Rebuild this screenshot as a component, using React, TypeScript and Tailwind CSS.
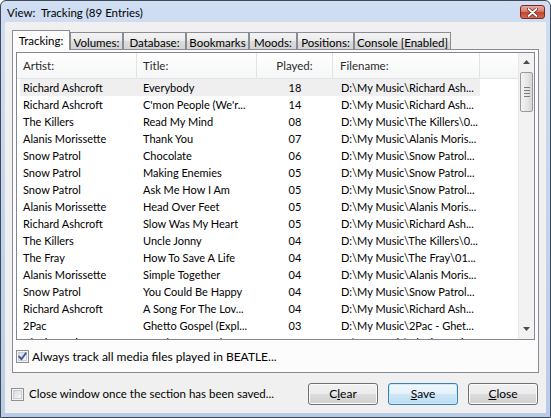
import React from "react";

type Row = [string, string, string, string];

const rows: Row[] = [
  ["Richard Ashcroft", "Everybody", "18", "D:\\My Music\\Richard Ash..."],
  ["Richard Ashcroft", "C'mon People (We'r...", "14", "D:\\My Music\\Richard Ash..."],
  ["The Killers", "Read My Mind", "08", "D:\\My Music\\The Killers\\0..."],
  ["Alanis Morissette", "Thank You", "07", "D:\\My Music\\Alanis Moris..."],
  ["Snow Patrol", "Chocolate", "06", "D:\\My Music\\Snow Patrol..."],
  ["Snow Patrol", "Making Enemies", "05", "D:\\My Music\\Snow Patrol..."],
  ["Snow Patrol", "Ask Me How I Am", "05", "D:\\My Music\\Snow Patrol..."],
  ["Alanis Morissette", "Head Over Feet", "05", "D:\\My Music\\Alanis Moris..."],
  ["Richard Ashcroft", "Slow Was My Heart", "05", "D:\\My Music\\Richard Ash..."],
  ["The Killers", "Uncle Jonny", "04", "D:\\My Music\\The Killers\\0..."],
  ["The Fray", "How To Save A Life", "04", "D:\\My Music\\The Fray\\01..."],
  ["Alanis Morissette", "Simple Together", "04", "D:\\My Music\\Alanis Moris..."],
  ["Snow Patrol", "You Could Be Happy", "04", "D:\\My Music\\Snow Patrol..."],
  ["Richard Ashcroft", "A Song For The Lov...", "04", "D:\\My Music\\Richard Ash..."],
  ["2Pac", "Ghetto Gospel (Expl...", "03", "D:\\My Music\\2Pac - Ghet..."],
  ["Alanis Morissette", "Hand In My Pocket", "03", "D:\\My Music\\Alanis Moris..."],
];

const tabs = [
  { label: "Tracking:", w: "w-[58px]", sel: true },
  { label: "Volumes:", w: "w-[53px]", sel: false },
  { label: "Database:", w: "w-[63px]", sel: false },
  { label: "Bookmarks", w: "w-[63px]", sel: false },
  { label: "Moods:", w: "w-[48px]", sel: false },
  { label: "Positions:", w: "w-[57px]", sel: false },
  { label: "Console [Enabled]", w: "w-[97px]", sel: false },
];

function CheckBox({ checked }: { checked: boolean }) {
  return (
    <div className="w-[13px] h-[13px] border border-[#8e8f8f] bg-[#f4f4f4] flex items-center justify-center shrink-0">
      <div className="w-[9px] h-[9px] border border-[#c9ccd1] bg-gradient-to-br from-[#d9dce0] to-[#f7f7f7] relative">
        {checked && (
          <svg width="11" height="11" viewBox="0 0 11 11" className="absolute -left-[2px] -top-[2px]">
            <path d="M2.2 5.6 L4.4 8.2 L8.8 2.2" fill="none" stroke="#3c56a0" strokeWidth="1.9" strokeLinecap="round" strokeLinejoin="round" />
          </svg>
        )}
      </div>
    </div>
  );
}

function Button({ children, focused }: { children: React.ReactNode; focused?: boolean }) {
  return (
    <div
      className={
        focused
          ? "w-[70px] h-[22px] rounded-[3px] border border-[#3c7fb1] bg-[linear-gradient(#f1f8fd_0%,#e3f1fb_50%,#cfe7f7_50%,#bcdcf2_100%)] shadow-[inset_0_0_0_1px_#c8ecfb] flex items-center justify-center text-[12px] text-black"
          : "w-[70px] h-[22px] rounded-[3px] border border-[#707070] bg-[linear-gradient(#f2f2f2_0%,#ebebeb_50%,#dddddd_50%,#cfcfcf_100%)] shadow-[inset_0_0_0_1px_#fbfbfb] flex items-center justify-center text-[12px] text-black"
      }
    >
      {children}
    </div>
  );
}

export default function App() {
  return (
    <div className="w-[551px] h-[418px] flex flex-col border border-[#404854] rounded-t-[6px] bg-gradient-to-b from-[#cfdef2] via-[#c2d5ee] to-[#b8cce8] overflow-hidden font-['Lato','Liberation_Sans',Arial,sans-serif] text-black">
      {/* Title bar */}
      <div className="h-[21px] shrink-0 flex items-start justify-between pl-[6px] pr-[5px]">
        <div className="pt-[5px] text-[11.5px] leading-[14px] whitespace-pre text-black">View:  Tracking (89 Entries)</div>
        <div className="mt-[4px] w-[25px] h-[14px] rounded-[3px] border border-[#7a2a22] bg-[linear-gradient(#e9a99c_0%,#d7806f_45%,#c2432e_50%,#cf6a52_100%)] flex items-center justify-center">
          <svg width="11" height="9" viewBox="0 0 11 9">
            <path d="M1.5 1 L9.5 8 M9.5 1 L1.5 8" stroke="#5a2018" strokeWidth="3.2" strokeLinecap="round" />
            <path d="M1.5 1 L9.5 8 M9.5 1 L1.5 8" stroke="#ffffff" strokeWidth="1.8" strokeLinecap="round" />
          </svg>
        </div>
      </div>

      {/* Client area */}
      <div className="flex-1 mx-[4px] mb-[4px] bg-[#f0f0f0] flex flex-col pt-[8px] px-[7px]">
        {/* Tabs */}
        <div className="h-[19px] flex items-end shrink-0">
          {tabs.map((t) =>
            t.sel ? (
              <div
                key={t.label}
                className={`${t.w} h-[20px] -mb-[1px] relative z-10 border border-b-0 border-[#898c95] bg-[#fcfcfc] text-[11.5px] leading-[14px] pt-[3px] text-center whitespace-nowrap`}
              >
                {t.label}
              </div>
            ) : (
              <div
                key={t.label}
                className={`${t.w} h-[17px] border border-b-0 border-[#898c95] bg-[linear-gradient(#f3f3f3_0%,#ebebeb_50%,#dddddd_50%,#d3d3d3_100%)] text-[11.5px] leading-[14px] pt-[3px] text-center whitespace-nowrap`}
              >
                {t.label}
              </div>
            )
          )}
        </div>

        {/* Tab panel */}
        <div className="h-[324px] shrink-0 border border-[#898c95] bg-[#fcfcfc] flex flex-col pt-[2px] px-[3px]">
          {/* List view */}
          <div className="h-[288px] shrink-0 border border-[#828790] bg-white flex overflow-hidden">
            <div className="flex-1 flex flex-col overflow-hidden">
              {/* Header */}
              <div className="h-[26px] shrink-0 flex bg-gradient-to-b from-white to-[#f5f6f7] border-b border-[#e5e5e5] text-[11.5px] text-[#2b2b2b]">
                <div className="w-[120px] border-r border-[#e3e3e3] pl-[6px] flex items-center">Artist:</div>
                <div className="w-[120px] border-r border-[#e3e3e3] pl-[6px] flex items-center">Title:</div>
                <div className="w-[76px] border-r border-[#e3e3e3] flex items-center justify-center">Played:</div>
                <div className="w-[147px] border-r border-[#e3e3e3] pl-[7px] flex items-center">Filename:</div>
                <div className="flex-1" />
              </div>
              {/* Rows */}
              {rows.map((r, i) => (
                <div
                  key={i}
                  className={`ml-[3px] w-[460px] h-[17px] shrink-0 flex items-center text-[11px] leading-[17px] whitespace-nowrap ${
                    i === 0 ? "bg-[#efefef]" : ""
                  }`}
                >
                  <div className="w-[117px] pl-[3px] overflow-hidden">{r[0]}</div>
                  <div className="w-[120px] pl-[6px] overflow-hidden">{r[1]}</div>
                  <div className="w-[76px] text-center">{r[2]}</div>
                  <div className="w-[147px] pl-[8px] overflow-hidden">{r[3]}</div>
                </div>
              ))}
            </div>
            {/* Scrollbar */}
            <div className="w-[16px] shrink-0 bg-[#f2f2f2] border-l border-[#e8e8e8] flex flex-col">
              <div className="h-[17px] flex items-center justify-center">
                <svg width="7" height="4" viewBox="0 0 7 4">
                  <path d="M0 4 L3.5 0 L7 4 Z" fill="#4d4d4d" />
                </svg>
              </div>
              <div className="mt-[2px] mx-[1px] h-[40px] rounded-[2px] border border-[#9a9a9a] bg-gradient-to-r from-[#f3f3f3] via-[#e8e8e8] to-[#d6d6d6] flex flex-col items-center justify-center gap-[2px]">
                <div className="w-[6px] h-[1px] bg-[#7c7c7c]" />
                <div className="w-[6px] h-[1px] bg-[#7c7c7c]" />
                <div className="w-[6px] h-[1px] bg-[#7c7c7c]" />
                <div className="w-[6px] h-[1px] bg-[#7c7c7c]" />
              </div>
              <div className="flex-1" />
              <div className="h-[17px] mb-[2px] flex items-center justify-center">
                <svg width="7" height="4" viewBox="0 0 7 4">
                  <path d="M0 0 L3.5 4 L7 0 Z" fill="#4d4d4d" />
                </svg>
              </div>
            </div>
          </div>

          {/* Always track */}
          <div className="mt-[10px] flex items-center h-[13px] gap-[3px]">
            <CheckBox checked />
            <span className="text-[12px] leading-[14px] whitespace-nowrap">Always track all media files played in BEATLE...</span>
          </div>
        </div>

        {/* Bottom row */}
        <div className="mt-[10px] h-[22px] flex items-center justify-between -ml-[1px] pr-[1px]">
          <div className="flex items-center gap-[5px]">
            <CheckBox checked={false} />
            <span className="text-[11.5px] leading-[14px] whitespace-nowrap">Close window once the section has been saved...</span>
          </div>
          <div className="flex gap-[10px]">
            <Button>
              C<span className="underline">l</span>ear
            </Button>
            <Button focused>
              <span className="underline">S</span>ave
            </Button>
            <Button>
              <span className="underline">C</span>lose
            </Button>
          </div>
        </div>
      </div>
    </div>
  );
}
